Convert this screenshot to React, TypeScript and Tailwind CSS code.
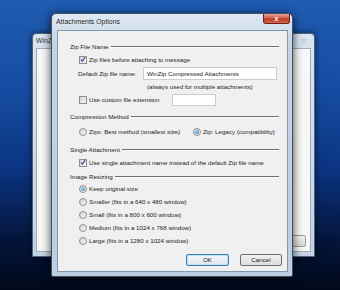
import React from "react";

function Check({ checked }: { checked?: boolean }) {
  return (
    <span className="flex h-[8px] w-[8px] shrink-0 items-center justify-center border border-[#8e8f8f] bg-[linear-gradient(135deg,#cfd3d9,#f7f7f7)]">
      {checked && (
        <svg width="7" height="7" viewBox="0 0 7 7" className="-mt-[1px]">
          <path d="M1 3.6 L2.8 5.4 L6 0.8" fill="none" stroke="#3b4f8a" strokeWidth="1.3" />
        </svg>
      )}
    </span>
  );
}

function Radio({ checked }: { checked?: boolean }) {
  return (
    <span className="flex h-[8px] w-[8px] shrink-0 items-center justify-center rounded-full border border-[#8e8f8f] bg-[linear-gradient(135deg,#cfd3d9,#f7f7f7)]">
      {checked && <span className="h-[4px] w-[4px] rounded-full bg-[radial-gradient(circle_at_35%_35%,#a9dcf7,#2a6cb5)]" />}
    </span>
  );
}

function Group({ title, className = "" }: { title: string; className?: string }) {
  return (
    <div className={"flex h-[10px] items-center pl-[12px] pr-[8px] " + className}>
      <span>{title}</span>
      <span className="ml-[2px] flex-1 border-t border-b border-t-[#6e6e6e] border-b-[#fdfdfd]" />
    </div>
  );
}

function Option({ children, kind, checked, className = "" }: { children: React.ReactNode; kind: "check" | "radio"; checked?: boolean; className?: string }) {
  return (
    <div className={"flex items-center gap-[2px] " + className}>
      {kind === "check" ? <Check checked={checked} /> : <Radio checked={checked} />}
      <span>{children}</span>
    </div>
  );
}

export default function App() {
  return (
    <div className="relative h-[290px] w-[340px] overflow-hidden bg-[linear-gradient(180deg,#1f5bb0_0%,#164da2_30%,#0b3482_58%,#04163d_82%,#01081a_100%)] font-['Liberation_Sans',Arial,sans-serif] text-[6.2px] text-[#222]">
      {/* main WinZip window behind */}
      <div className="absolute left-[32px] top-[33px] flex h-[224px] w-[283px] flex-col rounded-t-[4px] border border-[#4f6279] bg-[linear-gradient(180deg,#d9e4f0,#c3d3e4)] shadow-[0_0_6px_rgba(0,0,0,0.6)]">
        <div className="flex h-[14px] items-center justify-between pl-[3px] pr-[8px]">
          <span className="text-[6.8px] text-[#333]">WinZip</span>
          <span className="text-[7px] font-bold text-[#f5f8fb] [text-shadow:0_0_1px_#333]">x</span>
        </div>
        <div className="mx-[3px] mb-[4px] flex flex-1 items-end justify-end border border-[#9aabbe] bg-[#f7f7f7] p-[4px]">
          <span className="h-[12px] w-[30px] rounded-[2px] border border-[#9a9a9a] bg-[linear-gradient(180deg,#f2f2f2,#d8d8d8)]" />
        </div>
      </div>

      {/* Attachments Options dialog */}
      <div className="absolute left-[51px] top-[13px] flex h-[264px] w-[242px] flex-col rounded-t-[5px] rounded-b-[2px] border border-[#3f5068] bg-[linear-gradient(180deg,#dfe9f4_0%,#c4d4e5_12%,#bccde0_100%)] shadow-[0_2px_10px_rgba(0,0,0,0.75)]">
        <div className="flex h-[16px] items-start justify-between pl-[4px] pr-[2px]">
          <span className="mt-[3px] text-[6.9px] text-[#1a1a1a] [text-shadow:0_0_3px_#ffffff]">Attachments Options</span>
          <span className="flex h-[10px] w-[27px] items-center justify-center rounded-b-[3px] border border-t-0 border-[#6b2218] bg-[linear-gradient(180deg,#e7a493_0%,#d0604c_45%,#b83a24_55%,#d86a4a_100%)] text-[7px] font-bold leading-none text-white">
            x
          </span>
        </div>
        <div className="ml-[5px] flex h-[242px] w-[231px] flex-col border border-[#8397ae] bg-[#f0f0f0] pt-[11px]">
          <Group title="Zip File Name" />
          <Option kind="check" checked className="mt-[3px] h-[10px] pl-[21px]">Zip files before attaching to message</Option>
          <div className="mt-[2px] flex h-[13px] items-center pl-[20px]">
            <span className="w-[65px]">Default Zip file name:</span>
            <span className="flex h-[13px] w-[134px] items-center border border-[#c9ccd1] bg-white pl-[3px]">WinZip Compressed Attachments</span>
          </div>
          <div className="mt-[2px] flex h-[10px] items-center pl-[89px]">(always used for multiple attachments)</div>
          <div className="mt-[2px] flex h-[12px] items-center">
            <Option kind="check" className="w-[114px] pl-[21px]">Use custom file extension</Option>
            <span className="h-[12px] w-[44px] border border-[#c9ccd1] bg-white" />
          </div>
          <Group title="Compression Method" className="mt-[6px]" />
          <div className="mt-[5px] flex h-[10px] items-center">
            <Option kind="radio" className="w-[135px] pl-[21px]">Zipx: Best method (smallest size)</Option>
            <Option kind="radio" checked>Zip: Legacy (compatibility)</Option>
          </div>
          <Group title="Single Attachment" className="mt-[8px]" />
          <Option kind="check" checked className="mt-[3px] h-[10px] pl-[21px]">Use single attachment name instead of the default Zip file name</Option>
          <Group title="Image Resizing" className="mt-[4px]" />
          <div className="flex flex-col pl-[21px]">
            <Option kind="radio" checked className="h-[13px]">Keep original size</Option>
            <Option kind="radio" className="h-[13px]">Smaller (fits in a 640 x 480 window)</Option>
            <Option kind="radio" className="h-[13px]">Small (fits in a 800 x 600 window)</Option>
            <Option kind="radio" className="h-[13px]">Medium (fits in a 1024 x 768 window)</Option>
            <Option kind="radio" className="h-[13px]">Large (fits in a 1280 x 1024 window)</Option>
          </div>
          <div className="mt-[7px] flex h-[12px] justify-end gap-[11px] pr-[5px]">
            <button className="flex w-[43px] items-center justify-center rounded-[2px] border border-[#3c7fb1] bg-[linear-gradient(180deg,#f4f8fb,#dde6ee)] shadow-[inset_0_0_0_1px_#bfe1f5]">OK</button>
            <button className="flex w-[42px] items-center justify-center rounded-[2px] border border-[#707070] bg-[linear-gradient(180deg,#f2f2f2,#dcdcdc)]">Cancel</button>
          </div>
        </div>
      </div>
    </div>
  );
}
